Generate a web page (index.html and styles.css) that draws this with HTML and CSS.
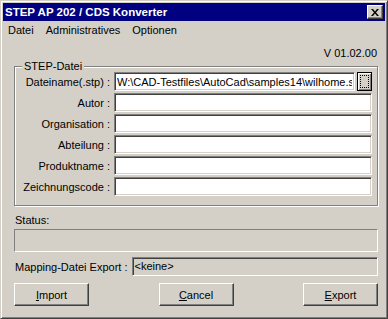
FILE: index.html
```html
<!DOCTYPE html>
<html lang="de">
<head>
    <meta charset="UTF-8">
    <title>STEP AP 202 / CDS Konverter</title>
    <link rel="stylesheet" href="styles.css">
</head>
<body>
<div class="window">
    <div class="titlebar">
        <span class="title">STEP AP 202 / CDS Konverter</span>
        <button class="close" type="button">
            <svg width="8" height="7" viewBox="0 0 8 7"><path d="M0 0h2l2 2.5L6 0h2L5 3.5 8 7H6L4 4.5 2 7H0l3-3.5z" fill="#000"/></svg>
        </button>
    </div>
    <div class="menubar">
        <span>Datei</span>
        <span>Administratives</span>
        <span>Optionen</span>
    </div>
    <div class="content">
        <div class="version">V 01.02.00</div>
        <fieldset class="group">
            <legend>STEP-Datei</legend>
            <div class="form-grid">
                <label>Dateiname(.stp) :</label>
                <div class="file-field">
                    <input class="edit" type="text" value="W:\CAD-Testfiles\AutoCad\samples14\wilhome.stp">
                    <button class="browse" type="button"><span class="focus"></span></button>
                </div>
                <label>Autor :</label>
                <input class="edit" type="text">
                <label>Organisation :</label>
                <input class="edit" type="text">
                <label>Abteilung :</label>
                <input class="edit" type="text">
                <label>Produktname :</label>
                <input class="edit" type="text">
                <label>Zeichnungscode :</label>
                <input class="edit" type="text">
            </div>
        </fieldset>
        <div class="status-label">Status:</div>
        <div class="status-box"></div>
        <div class="mapping-row">
            <span>Mapping-Datei Export :</span>
            <div class="mapping-box">&lt;keine&gt;</div>
        </div>
        <div class="buttons">
            <button class="push" type="button"><u>I</u>mport</button>
            <button class="push" type="button"><u>C</u>ancel</button>
            <button class="push" type="button"><u>E</u>xport</button>
        </div>
    </div>
</div>
</body>
</html>
```

FILE: styles.css
```css
body {
    margin: 0;
    font-family: "Liberation Sans", Arial, sans-serif;
    font-size: 11px;
    color: #000;
}
.window {
    width: 388px;
    height: 319px;
    box-sizing: border-box;
    background-color: #d4d0c8;
    border: 1px solid;
    border-color: #d4d0c8 #404040 #404040 #d4d0c8;
    box-shadow: inset 1px 1px 0 #fff, inset -1px -1px 0 #808080;
    padding: 2px;
}
.titlebar {
    height: 18px;
    background-color: #000080;
    display: flex;
    align-items: center;
    justify-content: space-between;
    padding: 0 2px 0 2px;
}
.title {
    color: #fff;
    font-weight: bold;
    font-size: 11.5px;
}
.close {
    width: 16px;
    height: 14px;
    padding: 0;
    box-sizing: border-box;
    background-color: #d4d0c8;
    border: 1px solid;
    border-color: #fff #404040 #404040 #fff;
    box-shadow: inset -1px -1px 0 #808080;
    display: flex;
    align-items: center;
    justify-content: center;
}
.menubar {
    height: 19px;
    line-height: 19px;
    display: flex;
    gap: 12px;
    padding-left: 5px;
}
.content {
    padding: 0 7px 0 11px;
}
.version {
    text-align: right;
    line-height: 14px;
    margin-top: 6px;
    padding-right: 1px;
}
.group {
    margin: 0;
    padding: 0 5px 9px 0;
    border: 1px solid #808080;
    box-shadow: 1px 1px 0 #fff, inset 1px 1px 0 #fff;
    min-width: 0;
}
.group legend {
    margin-left: 7px;
    padding: 0 2px;
    line-height: 12px;
    background-color: #d4d0c8;
}
.form-grid {
    display: grid;
    grid-template-columns: 96px 1fr;
    column-gap: 3px;
    row-gap: 2px;
    align-items: center;
}
.form-grid label {
    text-align: right;
    padding-right: 1px;
}
.edit {
    height: 19px;
    box-sizing: border-box;
    width: 100%;
    margin: 0;
    padding: 0 2px;
    font: inherit;
    background-color: #fff;
    border: 1px solid;
    border-color: #808080 #fff #fff #808080;
    box-shadow: inset 1px 1px 0 #404040, inset -1px -1px 0 #d4d0c8;
    outline: none;
}
.file-field {
    display: flex;
    gap: 2px;
}
.browse {
    flex: none;
    width: 15px;
    height: 19px;
    padding: 2px;
    box-sizing: border-box;
    background-color: #d4d0c8;
    border: 1px solid #000;
    box-shadow: inset 1px 1px 0 #fff, inset -1px -1px 0 #808080;
}
.browse .focus {
    display: block;
    height: 100%;
    box-sizing: border-box;
    border: 1px dotted #000;
}
.status-label {
    margin-top: 7px;
    line-height: 14px;
    padding-left: 1px;
}
.status-box {
    margin-top: 2px;
    height: 23px;
    box-sizing: border-box;
    border: 1px solid;
    border-color: #808080 #fff #fff #808080;
}
.mapping-row {
    margin-top: 5px;
    display: flex;
    align-items: center;
    gap: 4px;
    padding-left: 1px;
}
.mapping-box {
    flex: 1;
    height: 19px;
    line-height: 17px;
    box-sizing: border-box;
    padding-left: 2px;
    border: 1px solid;
    border-color: #808080 #fff #fff #808080;
    box-shadow: inset 1px 1px 0 #404040, inset -1px -1px 0 #d4d0c8;
}
.buttons {
    margin-top: 7px;
    display: flex;
    justify-content: space-between;
}
.push {
    width: 75px;
    height: 23px;
    padding: 0;
    font: inherit;
    color: #000;
    background-color: #d4d0c8;
    border: 1px solid;
    border-color: #fff #404040 #404040 #fff;
    box-shadow: inset -1px -1px 0 #808080;
}
```
